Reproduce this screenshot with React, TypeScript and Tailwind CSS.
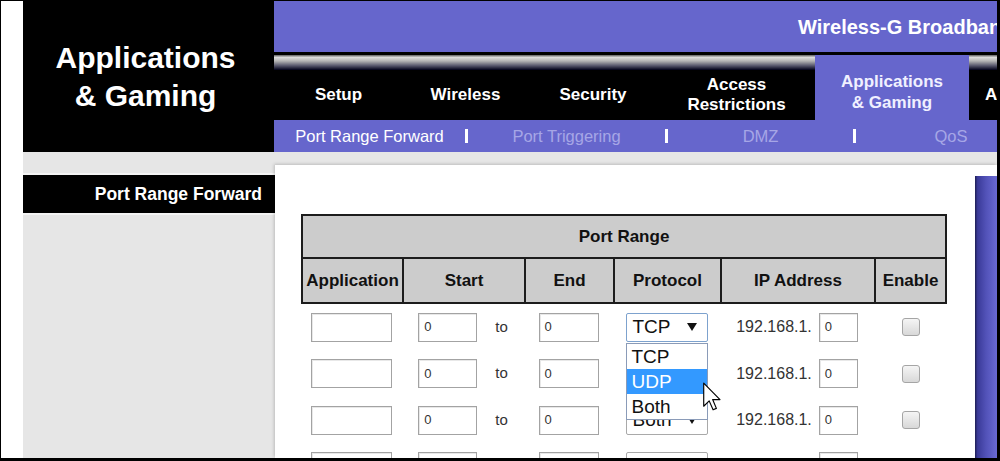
import React from "react";

const tabs = [
  { lines: ["Setup"], w: "w-[129px]" },
  { lines: ["Wireless"], w: "w-[125px]" },
  { lines: ["Security"], w: "w-[130px]" },
  { lines: ["Access", "Restrictions"], w: "w-[157px]" },
];

const rows = [
  { h: "h-[46px]", proto: "TCP", open: true },
  { h: "h-[47px]", proto: "TCP", open: false },
  { h: "h-[46px]", proto: "Both", open: false },
  { h: "h-[47px]", proto: "Both", open: false },
];

const gradientStrip =
  "h-[15px] shrink-0 bg-[linear-gradient(to_bottom,#5e5e5e_0%,#dcdcdc_16%,#b4b4b4_40%,#5a5a6e_70%,#000018_100%)]";

const inputBox =
  "h-[29px] bg-white border border-[#a3a3a3] shadow-[inset_1px_1px_0_#e8e8e8] text-[13px] text-[#333] flex items-center pl-[5px]";

function Arrow() {
  return (
    <svg width="10" height="9" viewBox="0 0 10 9">
      <path d="M0 0 L10 0 L5 8 Z" fill="#111" />
    </svg>
  );
}

function ProtocolSelect({ value, open }: { value: string; open: boolean }) {
  return (
    <div className="relative w-[82px]">
      <div
        className={`h-[29px] flex items-center justify-between pl-[6px] pr-[10px] bg-white rounded-[2px] text-[19px] text-[#111] border ${
          open ? "border-[#7da2ce]" : "border-[#a9a9a9]"
        }`}
      >
        <span>{value}</span>
        <Arrow />
      </div>
      {open && (
        <>
          <div className="absolute z-10 top-[30px] left-0 w-[82px] bg-white border border-[#8a9bb8] text-[19px] text-[#111]">
            <div className="h-[25px] leading-[25px] pl-[5px]">TCP</div>
            <div className="h-[25px] leading-[25px] pl-[5px] bg-[#3399ff] text-white">UDP</div>
            <div className="h-[25px] leading-[25px] pl-[5px]">Both</div>
          </div>
          <svg
            className="absolute z-20 left-[77px] top-[69px]"
            width="18"
            height="29"
            viewBox="0 0 12.5 19.5"
          >
            <path
              d="M0.5 0.5 L0.5 16.5 L4.3 12.8 L7 19 L9.3 18 L6.7 11.9 L11.8 11.9 Z"
              fill="#fff"
              stroke="#000"
              strokeWidth="0.8"
              strokeLinejoin="round"
            />
          </svg>
        </>
      )}
    </div>
  );
}

export default function App() {
  return (
    <div className="w-[1000px] h-[461px] bg-black pt-px pl-px pr-[3px] pb-[3px] overflow-hidden font-['Liberation_Sans',Arial,sans-serif]">
      <div className="flex h-full">
        {/* white strip on the left */}
        <div className="w-[22px] shrink-0 bg-white" />

        <div className="flex-1 flex flex-col min-w-0">
          {/* Header */}
          <div className="flex h-[151px] shrink-0">
            <div className="w-[251px] shrink-0 bg-black flex items-center justify-center pr-[6px] text-center text-white font-bold text-[30px] leading-[38px]">
              Applications
              <br />
              &amp; Gaming
            </div>

            <div className="flex-1 min-w-0 flex flex-col">
              <div className="h-[51px] shrink-0 bg-[#6666cc] flex items-center pl-[524px] overflow-hidden whitespace-nowrap text-white font-bold text-[20px]">
                Wireless-G Broadband Router
              </div>

              {/* Tabs */}
              <div className="h-[68px] shrink-0 bg-black pt-[3px] flex overflow-hidden">
                {tabs.map((t) => (
                  <div key={t.lines[0]} className={`${t.w} shrink-0 flex flex-col`}>
                    <div className={gradientStrip} />
                    <div className="flex-1 flex flex-col items-center justify-center text-white font-bold text-[17px] leading-[20px] text-center">
                      {t.lines.map((l) => (
                        <span key={l}>{l}</span>
                      ))}
                    </div>
                  </div>
                ))}
                <div className="w-[154px] shrink-0 bg-[#6666cc] pt-[8px] flex flex-col">
                  <div className="flex-1 flex flex-col items-center justify-center text-[#f0f0ff] font-bold text-[17px] leading-[21px] text-center">
                    <span>Applications</span>
                    <span>&amp; Gaming</span>
                  </div>
                </div>
                <div className="w-[160px] shrink-0 flex flex-col">
                  <div className={gradientStrip} />
                  <div className="flex-1 flex items-center pl-[16px] text-white font-bold text-[17px] whitespace-nowrap">
                    Administration
                  </div>
                </div>
              </div>

              {/* Sub navigation */}
              <div className="h-[32px] shrink-0 bg-[#6666cc] flex items-center overflow-hidden text-[16.5px] whitespace-nowrap">
                <div className="w-[191px] shrink-0 text-center text-white">Port Range Forward</div>
                <div className="w-[3px] h-[14px] shrink-0 bg-white" />
                <div className="w-[197px] shrink-0 text-center text-[#a6a6e6]">Port Triggering</div>
                <div className="w-[3px] h-[14px] shrink-0 bg-white" />
                <div className="w-[185px] shrink-0 text-center text-[#a6a6e6]">DMZ</div>
                <div className="w-[3px] h-[14px] shrink-0 bg-white" />
                <div className="w-[190px] shrink-0 text-center text-[#a6a6e6]">QoS</div>
              </div>
            </div>
          </div>

          {/* Body */}
          <div className="flex flex-1 min-h-0">
            <div className="w-[252px] shrink-0 bg-[#e6e6e6] pt-[21px]">
              <div className="h-[42px] bg-black border-y-2 border-[#f4f4f4] flex items-center justify-end pr-[13px] text-white font-bold text-[17.5px]">
                Port Range Forward
              </div>
            </div>

            <div className="flex-1 min-w-0 bg-[#e6e6e6] pt-[13px] flex flex-col">
              <div className="flex-1 min-h-0 flex bg-white shadow-[-1px_-1px_3px_rgba(0,0,0,0.18)] overflow-hidden">
                <div className="flex-1 min-w-0 pl-[26px] pt-[49px]">
                  {/* Table header */}
                  <div className="w-[646px] border-2 border-[#1c1c1c] bg-[#cccccc] text-[#111] font-bold text-[17px]">
                    <div className="h-[43px] flex items-center justify-center border-b-2 border-[#1c1c1c]">
                      Port Range
                    </div>
                    <div className="grid grid-cols-[99px_122px_89px_107px_154px_71px] h-[43px]">
                      <div className="flex items-center justify-center">Application</div>
                      <div className="flex items-center justify-center border-l-2 border-[#1c1c1c]">Start</div>
                      <div className="flex items-center justify-center border-l-2 border-[#1c1c1c]">End</div>
                      <div className="flex items-center justify-center border-l-2 border-[#1c1c1c]">Protocol</div>
                      <div className="flex items-center justify-center border-l-2 border-[#1c1c1c]">IP Address</div>
                      <div className="flex items-center justify-center border-l-2 border-[#1c1c1c]">Enable</div>
                    </div>
                  </div>

                  {/* Rows */}
                  {rows.map((r, i) => (
                    <div
                      key={i}
                      className={`${r.h} w-[646px] grid grid-cols-[101px_122px_89px_107px_154px_73px] items-center`}
                    >
                      <div className="flex justify-center">
                        <div className={`${inputBox} w-[81px]`} />
                      </div>
                      <div className="flex items-center justify-center gap-[18px]">
                        <div className={`${inputBox} w-[59px]`}>0</div>
                        <span className="text-[15px] text-[#333]">to</span>
                      </div>
                      <div className="flex justify-center">
                        <div className={`${inputBox} w-[60px]`}>0</div>
                      </div>
                      <div className="flex justify-center">
                        <ProtocolSelect value={r.proto} open={r.open} />
                      </div>
                      <div className="flex items-center justify-center gap-[7px]">
                        <span className="text-[16px] text-[#333]">192.168.1.</span>
                        <div className={`${inputBox} w-[39px]`}>0</div>
                      </div>
                      <div className="flex justify-center">
                        <div className="w-[18px] h-[18px] rounded-[3px] border border-[#a5a5a5] bg-[linear-gradient(#f5f5f5,#d8d8d8)]" />
                      </div>
                    </div>
                  ))}
                </div>

                {/* Purple side bar */}
                <div className="w-[22px] shrink-0 mt-[11px] bg-[linear-gradient(to_right,#1e1e55_0%,#3a3a98_12%,#5252b8_50%,#6a6ad4_100%)]" />
              </div>
            </div>
          </div>
        </div>
      </div>
    </div>
  );
}
